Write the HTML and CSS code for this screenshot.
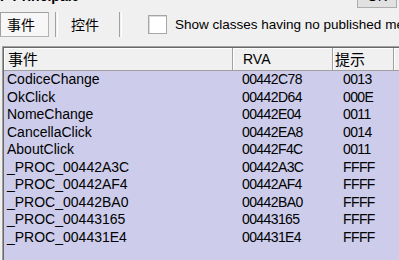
FILE: index.html
```html
<!DOCTYPE html>
<html lang="zh-CN">

<head>
    <meta charset="UTF-8">
    <meta name="viewport" content="width=device-width, initial-scale=1.0">
    <title>F Principale</title>

    <link rel="stylesheet" href="styles.css">

</head>

<body>

    <div class="top-bar">
        <span class="form-name">F Principale</span>
        <button class="btn-ok">OK</button>
    </div>

    <div class="tool-bar">
        <a href="#" class="tab tab-on">事件</a>
        <span class="sep"></span>
        <a href="#" class="tab">控件</a>
        <span class="sep"></span>
        <label class="check"><span class="check-box"></span>Show classes having no published methods</label>
    </div>

    <div class="list">
        <div class="list-head">
            <div class="col-name">事件</div>
            <div class="col-rva">RVA</div>
            <div class="col-hint">提示</div>
            <div class="col-rest"></div>
        </div>
        <div class="list-body">
            <div class="row"><span class="c1">CodiceChange</span><span class="c2">00442C78</span><span class="c3">0013</span></div>
            <div class="row"><span class="c1">OkClick</span><span class="c2">00442D64</span><span class="c3">000E</span></div>
            <div class="row"><span class="c1">NomeChange</span><span class="c2">00442E04</span><span class="c3">0011</span></div>
            <div class="row"><span class="c1">CancellaClick</span><span class="c2">00442EA8</span><span class="c3">0014</span></div>
            <div class="row"><span class="c1">AboutClick</span><span class="c2">00442F4C</span><span class="c3">0011</span></div>
            <div class="row"><span class="c1">_PROC_00442A3C</span><span class="c2">00442A3C</span><span class="c3">FFFF</span></div>
            <div class="row"><span class="c1">_PROC_00442AF4</span><span class="c2">00442AF4</span><span class="c3">FFFF</span></div>
            <div class="row"><span class="c1">_PROC_00442BA0</span><span class="c2">00442BA0</span><span class="c3">FFFF</span></div>
            <div class="row"><span class="c1">_PROC_00443165</span><span class="c2">00443165</span><span class="c3">FFFF</span></div>
            <div class="row"><span class="c1">_PROC_004431E4</span><span class="c2">004431E4</span><span class="c3">FFFF</span></div>
        </div>
    </div>

</body>

</html>
```

FILE: styles.css
```css
body {
    margin: 0;
    width: 399px;
    height: 260px;
    overflow: hidden;
    background-color: #f0f0f0;
    color: #000;
    font-family: "Liberation Sans", "Noto Sans CJK SC", sans-serif;
    font-size: 14px;
}

/* 顶部被裁掉的一条 */

.top-bar {
    display: flex;
    align-items: flex-end;
    height: 9px;
    overflow: hidden;
}

.form-name {
    flex-shrink: 0;
    margin-bottom: 6px;
    line-height: 13px;
    font-weight: bold;
    white-space: nowrap;
}

.btn-ok {
    flex-shrink: 0;
    margin-left: auto;
    margin-right: 2px;
    margin-bottom: 1px;
    width: 40px;
    height: 24px;
    padding: 0;
    border: 1px solid #adadad;
    background-color: #e1e1e1;
    font-family: inherit;
    font-size: 14px;
    line-height: 20px;
}

/* 工具条 */

.tool-bar {
    display: flex;
    align-items: center;
    height: 25px;
    margin-top: 3px;
    white-space: nowrap;
}

.tool-bar > * {
    flex-shrink: 0;
}

.tool-bar .tab {
    display: block;
    height: 25px;
    line-height: 25px;
    color: #000;
    text-decoration: none;
    font-family: "Noto Sans CJK SC", sans-serif;
    font-size: 14px;
}

.tool-bar .tab-on {
    box-sizing: border-box;
    width: 49px;
    padding-left: 6px;
    line-height: 23px;
    border: 1px solid #b4b4b4;
    border-top-color: #a0a0a0;
    border-left-color: #a0a0a0;
    background-color: #f7f7f7;
}

.tool-bar .sep {
    width: 1px;
    height: 25px;
    border-left: 1px solid #a0a0a0;
    border-right: 1px solid #fff;
    margin: 0 13px 0 6px;
}

.tool-bar .sep + .tab + .sep {
    margin-left: 20px;
    margin-right: 26px;
}

.tool-bar .check {
    display: flex;
    align-items: center;
    font-size: 13.5px;
}

.check-box {
    flex-shrink: 0;
    box-sizing: border-box;
    width: 19px;
    height: 19px;
    margin-right: 8px;
    border: 1px solid #a6a6a6;
    box-shadow: inset 1px 1px #dcdcdc;
    background-color: #fff;
}

/* 列表 */

.list {
    width: 430px;
    height: 230px;
    margin: 9px 0 0 2px;
    border-top: 1px solid #a0a0a0;
    border-left: 1px solid #a0a0a0;
    background-color: #cdcdeb;
}

.list-head,
.row {
    display: grid;
    grid-template-columns: 229px 100px 61px 1fr;
}

.list-head {
    height: 23px;
    border-top: 1px solid #696969;
    border-left: 1px solid #696969;
    background-color: #f0f0f0;
}

.list-head div {
    box-sizing: border-box;
    height: 23px;
    line-height: 22px;
    border-right: 1px solid #a0a0a0;
    border-bottom: 1px solid #a0a0a0;
    box-shadow: inset 1px 1px #fff;
    white-space: nowrap;
}

.list-head .col-name,
.list-head .col-hint {
    font-family: "Noto Sans CJK SC", sans-serif;
    font-size: 15px;
}

.list-head .col-name {
    padding-left: 4px;
}

.list-head .col-rva {
    padding-left: 10px;
}

.list-head .col-hint {
    padding-left: 2px;
}

.list-body {
    border-left: 1px solid #696969;
    height: 206px;
}

.row {
    height: 17.5px;
    line-height: 17.5px;
    white-space: nowrap;
}

.row .c1 {
    padding-left: 3px;
}

.row .c2 {
    padding-left: 9px;
    letter-spacing: -0.6px;
}

.row .c3 {
    padding-left: 10px;
    letter-spacing: -0.6px;
}
```
